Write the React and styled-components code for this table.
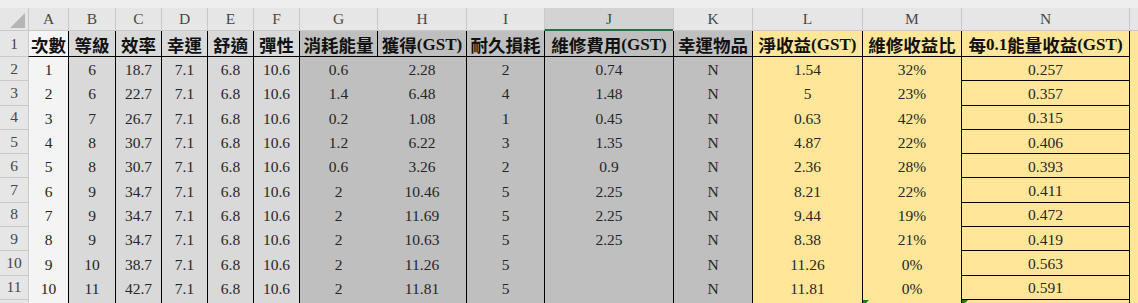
import React from 'react';
import styled, { createGlobalStyle } from 'styled-components';

const GlobalStyle = createGlobalStyle`
  html, body { margin: 0; padding: 0; background: #ffffff; overflow: hidden; }
  #root { width: 1138px; height: 303px; }
`;

const TONES = {
  pale: '#f4f4f4',
  light: '#d9d9d9',
  dark: '#bfbfbf',
  yellow: '#ffe699',
};

const COLUMNS = [
  { id: 'A', width: 40, tone: 'pale', edge: false },
  { id: 'B', width: 47, tone: 'light', edge: true },
  { id: 'C', width: 46, tone: 'light', edge: true },
  { id: 'D', width: 46, tone: 'light', edge: true },
  { id: 'E', width: 46, tone: 'light', edge: true },
  { id: 'F', width: 46, tone: 'light', edge: true },
  { id: 'G', width: 78, tone: 'dark', edge: true },
  { id: 'H', width: 89, tone: 'dark', edge: false },
  { id: 'I', width: 78, tone: 'dark', edge: true },
  { id: 'J', width: 129, tone: 'dark', edge: true, selected: true },
  { id: 'K', width: 79, tone: 'dark', edge: true },
  { id: 'L', width: 110, tone: 'yellow', edge: true },
  { id: 'M', width: 99, tone: 'yellow', edge: true, flagged: true },
  { id: 'N', width: 168, tone: 'yellow', edge: true, ruled: true, flagged: true },
];

const TITLES = [
  '次數', '等級', '效率', '幸運', '舒適', '彈性', '消耗能量', '獲得(GST)',
  '耐久損耗', '維修費用(GST)', '幸運物品', '淨收益(GST)', '維修收益比', '每0.1能量收益(GST)',
];

const ROWS = [
  ['1', '6', '18.7', '7.1', '6.8', '10.6', '0.6', '2.28', '2', '0.74', 'N', '1.54', '32%', '0.257'],
  ['2', '6', '22.7', '7.1', '6.8', '10.6', '1.4', '6.48', '4', '1.48', 'N', '5', '23%', '0.357'],
  ['3', '7', '26.7', '7.1', '6.8', '10.6', '0.2', '1.08', '1', '0.45', 'N', '0.63', '42%', '0.315'],
  ['4', '8', '30.7', '7.1', '6.8', '10.6', '1.2', '6.22', '3', '1.35', 'N', '4.87', '22%', '0.406'],
  ['5', '8', '30.7', '7.1', '6.8', '10.6', '0.6', '3.26', '2', '0.9', 'N', '2.36', '28%', '0.393'],
  ['6', '9', '34.7', '7.1', '6.8', '10.6', '2', '10.46', '5', '2.25', 'N', '8.21', '22%', '0.411'],
  ['7', '9', '34.7', '7.1', '6.8', '10.6', '2', '11.69', '5', '2.25', 'N', '9.44', '19%', '0.472'],
  ['8', '9', '34.7', '7.1', '6.8', '10.6', '2', '10.63', '5', '2.25', 'N', '8.38', '21%', '0.419'],
  ['9', '10', '38.7', '7.1', '6.8', '10.6', '2', '11.26', '5', '', 'N', '11.26', '0%', '0.563'],
  ['10', '11', '42.7', '7.1', '6.8', '10.6', '2', '11.81', '5', '', 'N', '11.81', '0%', '0.591'],
];

const GRID_LINE = '#c9c9c9';

const Sheet = styled.div`
  display: grid;
  grid-template-columns: 28px ${COLUMNS.map((c) => `${c.width}px`).join(' ')} 1fr;
  grid-template-rows: 8px 23px 26px repeat(11, 24.3px);
  width: 1138px;
  height: 303px;
  overflow: hidden;
  background: #ffffff;
  font-family: "Liberation Serif", "Noto Sans CJK TC", serif;
`;

const TopStrip = styled.div`
  grid-column: 1 / -1;
  background: #eeeeee;
`;

const Corner = styled.div`
  background: #e6e6e6;
  border-bottom: 1px solid ${GRID_LINE};
  display: flex;
  align-items: flex-end;
  justify-content: flex-end;
  padding: 0 3px 2px 0;
  box-sizing: border-box;
`;

const ColumnHeader = styled.div`
  box-sizing: border-box;
  background: ${(p) => (p.$selected ? '#d3d3d3' : '#e6e6e6')};
  border-left: 1px solid ${GRID_LINE};
  border-bottom: ${(p) => (p.$selected ? '2px solid #217346' : `1px solid ${GRID_LINE}`)};
  display: flex;
  align-items: center;
  justify-content: center;
  font-size: 15.5px;
  line-height: 20px;
  color: ${(p) => (p.$selected ? '#25553a' : '#474747')};
  padding-top: ${(p) => (p.$selected ? '1px' : '0')};
`;

const RowHeader = styled.div`
  box-sizing: border-box;
  background: #e6e6e6;
  border-bottom: 1px solid ${GRID_LINE};
  display: flex;
  align-items: center;
  justify-content: center;
  font-size: 15.5px;
  line-height: 18px;
  color: #474747;
`;

const TitleCell = styled.div`
  box-sizing: border-box;
  background: ${(p) => TONES[p.$tone]};
  border-left: 1px solid ${(p) => (p.$edge ? '#000000' : GRID_LINE)};
  border-bottom: 1px solid #000000;
  display: flex;
  align-items: center;
  justify-content: center;
  white-space: nowrap;
  font-weight: 700;
  font-size: 17px;
  line-height: 20px;
  color: #111111;
  padding-top: 2px;
`;

const Han = styled.span`
  font-family: "Noto Sans CJK TC", sans-serif;
  font-size: 17.5px;
  font-weight: 700;
`;

const Latin = styled.span`
  font-family: "Liberation Serif", serif;
  font-size: 17px;
  font-weight: 700;
`;

const DataCell = styled.div`
  position: relative;
  box-sizing: border-box;
  background: ${(p) => TONES[p.$tone]};
  border-left: 1px solid ${(p) => (p.$edge ? '#000000' : p.$first ? GRID_LINE : 'transparent')};
  border-bottom: ${(p) => (p.$ruled ? '1px solid #000000' : 'none')};
  display: flex;
  align-items: center;
  justify-content: center;
  white-space: nowrap;
  font-size: 15.5px;
  line-height: 18px;
  color: #262626;
  padding-top: 2px;
`;

const Spill = styled.div`
  box-sizing: border-box;
  background: ${(p) => (p.$header ? '#e6e6e6' : TONES.yellow)};
  border-left: 1px solid ${(p) => (p.$header ? GRID_LINE : '#000000')};
  border-bottom: ${(p) => (p.$header ? `1px solid ${GRID_LINE}` : 'none')};
`;

const ErrorMark = styled.span`
  position: absolute;
  top: 0;
  left: 0;
  width: 0;
  height: 0;
  border-top: 6px solid #1e7b2c;
  border-right: 6px solid transparent;
`;

function splitTitle(text) {
  return text.split(/([\u3400-\u9fff]+)/).filter(Boolean).map((part, i) =>
    /[\u3400-\u9fff]/.test(part) ? <Han key={i}>{part}</Han> : <Latin key={i}>{part}</Latin>
  );
}

function CornerMark() {
  return (
    <svg width="15" height="15" viewBox="0 0 15 15" aria-hidden="true">
      <polygon points="15,0 15,15 0,15" fill="#b5b5b5" />
    </svg>
  );
}

export default function App() {
  return (
    <>
      <GlobalStyle />
      <Sheet>
        <TopStrip />

        <Corner>
          <CornerMark />
        </Corner>
        {COLUMNS.map((c) => (
          <ColumnHeader key={c.id} $selected={c.selected}>{c.id}</ColumnHeader>
        ))}
        <Spill $header />

        <RowHeader>1</RowHeader>
        {COLUMNS.map((c, i) => (
          <TitleCell key={c.id} $tone={c.tone} $edge={i > 0}>
            {splitTitle(TITLES[i])}
          </TitleCell>
        ))}
        <Spill />

        {ROWS.map((row, r) => (
          <React.Fragment key={r}>
            <RowHeader>{r + 2}</RowHeader>
            {COLUMNS.map((c, i) => (
              <DataCell key={c.id} $tone={c.tone} $edge={c.edge} $first={i === 0} $ruled={c.ruled}>
                {row[i]}
              </DataCell>
            ))}
            <Spill />
          </React.Fragment>
        ))}

        <RowHeader />
        {COLUMNS.map((c, i) => (
          <DataCell key={c.id} $tone={c.tone} $edge={c.edge} $first={i === 0}>
            {c.flagged ? <ErrorMark /> : null}
          </DataCell>
        ))}
        <Spill />
      </Sheet>
    </>
  );
}
